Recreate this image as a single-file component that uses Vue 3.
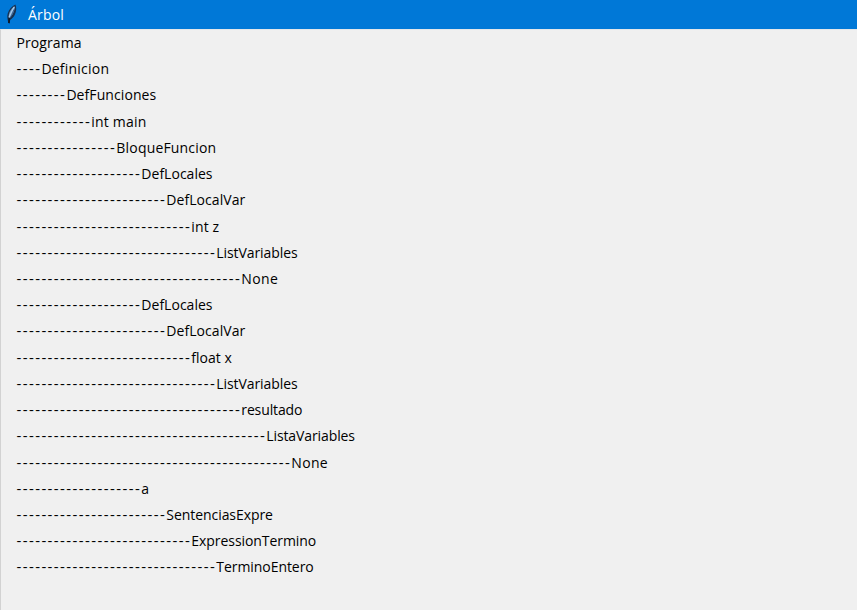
<script setup>
// Each entry: depth in the tree, node name, letter tracking in px
const rows = [
  [0, 'Programa', 0.1],
  [1, 'Definicion', 0.22],
  [2, 'DefFunciones', 0.08],
  [3, 'int main', 0.18],
  [4, 'BloqueFuncion', 0.18],
  [5, 'DefLocales', 0.02],
  [6, 'DefLocalVar', 0.06],
  [7, 'int z', 0.1],
  [8, 'ListVariables', -0.08],
  [9, 'None', 0.35],
  [5, 'DefLocales', 0.02],
  [6, 'DefLocalVar', 0.06],
  [7, 'float x', 0],
  [8, 'ListVariables', -0.08],
  [9, 'resultado', -0.12],
  [10, 'ListaVariables', -0.1],
  [11, 'None', 0.35],
  [5, 'a', 0],
  [6, 'SentenciasExpre', -0.06],
  [7, 'ExpressionTermino', -0.06],
  [8, 'TerminoEntero', -0.06],
].map(([depth, name, tracking]) => ({ dashes: '-'.repeat(depth * 4), name, tracking }))
</script>

<template>
  <div class="window">
    <header class="titlebar">
      <svg class="feather" width="16" height="22" viewBox="0 0 16 22">
        <path d="M3.4 18.8 C2.6 16 1.8 12.8 2.7 9.6 C4 5.6 7 2 10.4 0.6 C11.6 3 11.6 7.4 9.8 10.8 C8.6 13.2 7 15 5.2 15.8 L4.5 19.4 Z" fill="#17304f" />
        <path d="M3.8 14 C3 9.8 5.6 4.8 9.6 2 C10.2 5.8 8 11 4.6 14 Z" fill="#5f8fc0" />
        <path d="M9.2 3 C7.4 6 5.2 9.6 4.3 13.2" fill="none" stroke="#a9c9e6" stroke-width="1.4" />
        <path d="M8.8 5.6 C8 8.8 6.4 11.6 4.8 14.4" fill="none" stroke="#31567f" stroke-width="0.8" />
        <path d="M4.4 14.2 L3.9 19.2" stroke="#0d1726" stroke-width="1.7" />
      </svg>
      <span class="title">Árbol</span>
    </header>
    <main class="tree">
      <div v-for="(row, i) in rows" :key="i" class="row">
        <span v-if="row.dashes" class="dashes">{{ row.dashes }}</span>
        <span class="name" :style="{ letterSpacing: row.tracking + 'px' }">{{ row.name }}</span>
      </div>
    </main>
  </div>
</template>

<style>
body {
  margin: 0;
  background: #f0f0f0;
}
</style>

<style scoped>
.window {
  box-sizing: border-box;
  width: 100%;
  height: 610px;
  display: flex;
  flex-direction: column;
  overflow: hidden;
  background: #f0f0f0;
  font-family: "Open Sans", "Noto Sans", sans-serif;
  font-size: 14px;
  color: #000;
}
.titlebar {
  flex: none;
  box-sizing: border-box;
  height: 29px;
  display: flex;
  align-items: center;
  padding: 0 0 0 5px;
  gap: 7px;
  background: #0078d7;
  color: #fff;
}
.feather {
  display: block;
}
.title {
  line-height: 20px;
  letter-spacing: 0.2px;
}
.tree {
  flex: 1;
  border-left: 1px solid #d2d2d2;
  border-top: 1px solid #e3e7ea;
  padding-left: 15.4px;
}
.row {
  display: flex;
  height: 26.23px;
  line-height: 25.8px;
  white-space: pre;
}
.dashes {
  font-size: 15px;
  letter-spacing: 1.42px;
}
</style>
